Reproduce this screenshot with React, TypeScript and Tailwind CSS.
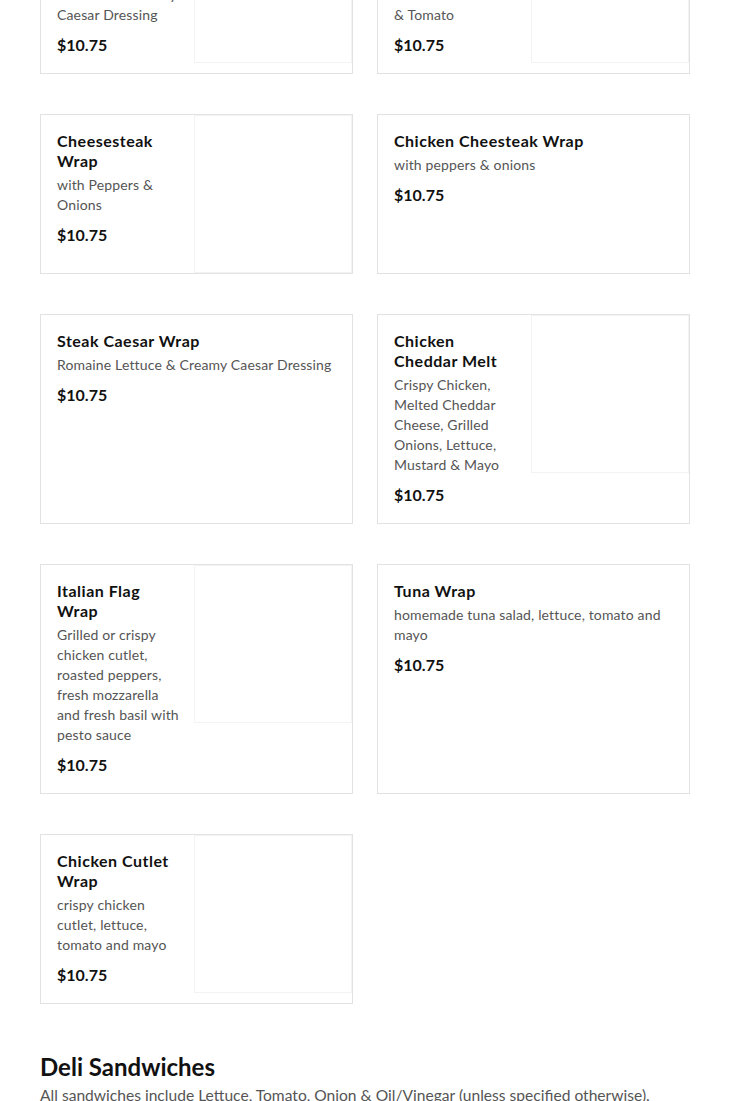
import React from "react";

type Item = { name: string; desc: string; price: string; img?: boolean };

const rows: Item[][] = [
  [
    {
      name: "Chicken Caesar Wrap",
      desc: "Grilled Chicken, Romaine & Creamy Caesar Dressing",
      price: "$10.75",
      img: true,
    },
    {
      name: "Grilled Chicken Wrap",
      desc: "Grilled Chicken, Fresh Mozzarella &\u00a0Tomato",
      price: "$10.75",
      img: true,
    },
  ],
  [
    { name: "Cheesesteak Wrap", desc: "with Peppers & Onions", price: "$10.75", img: true },
    { name: "Chicken Cheesteak Wrap", desc: "with peppers & onions", price: "$10.75" },
  ],
  [
    { name: "Steak Caesar Wrap", desc: "Romaine Lettuce & Creamy Caesar Dressing", price: "$10.75" },
    {
      name: "Chicken Cheddar Melt",
      desc: "Crispy Chicken, Melted Cheddar Cheese, Grilled Onions, Lettuce, Mustard & Mayo",
      price: "$10.75",
      img: true,
    },
  ],
  [
    {
      name: "Italian Flag Wrap",
      desc: "Grilled or crispy chicken cutlet, roasted peppers, fresh mozzarella and fresh basil with pesto sauce",
      price: "$10.75",
      img: true,
    },
    { name: "Tuna Wrap", desc: "homemade tuna salad, lettuce, tomato and mayo", price: "$10.75" },
  ],
  [
    {
      name: "Chicken Cutlet Wrap",
      desc: "crispy chicken cutlet, lettuce, tomato and mayo",
      price: "$10.75",
      img: true,
    },
  ],
];

function Card({ item }: { item: Item }) {
  return (
    <div className="flex border border-[#e2e2e2] bg-white">
      <div
        className={
          item.img
            ? "w-[153px] shrink-0 pt-4 pb-4 pl-4 pr-[13px]"
            : "flex-1 min-w-0 pt-4 pb-4 pl-4 pr-[12px]"
        }
      >
        <div className="text-[16px] leading-5 font-bold tracking-[0.5px] text-[#111111]">{item.name}</div>
        <div className="mt-1 text-[14px] leading-5 tracking-[0.15px] text-[#555555]">{item.desc}</div>
        <div className="mt-2 text-[16px] leading-6 font-bold text-[#111111]">{item.price}</div>
      </div>
      {item.img && (
        <div className="w-[158px] h-[158px] shrink-0 border border-[#f3f3f3] bg-white" />
      )}
    </div>
  );
}

export default function App() {
  return (
    <div
      className="w-[730px] h-[1101px] overflow-hidden bg-white"
      style={{ fontFamily: "Lato, 'Open Sans', sans-serif" }}
    >
      <div className="px-10 -mt-[96px]">
        <div className="grid grid-cols-2 gap-x-6 gap-y-10">
          {rows.map((row, i) => (
            <React.Fragment key={i}>
              {row.map((item, j) => (
                <Card key={j} item={item} />
              ))}
            </React.Fragment>
          ))}
        </div>
        <h2 className="mt-[47px] text-[24px] leading-8 font-bold text-[#111111]">Deli Sandwiches</h2>
        <p className="mt-0 text-[15.6px] leading-6 text-[#555555]">
          All sandwiches include Lettuce, Tomato, Onion &amp; Oil/Vinegar (unless specified otherwise).
        </p>
      </div>
    </div>
  );
}
